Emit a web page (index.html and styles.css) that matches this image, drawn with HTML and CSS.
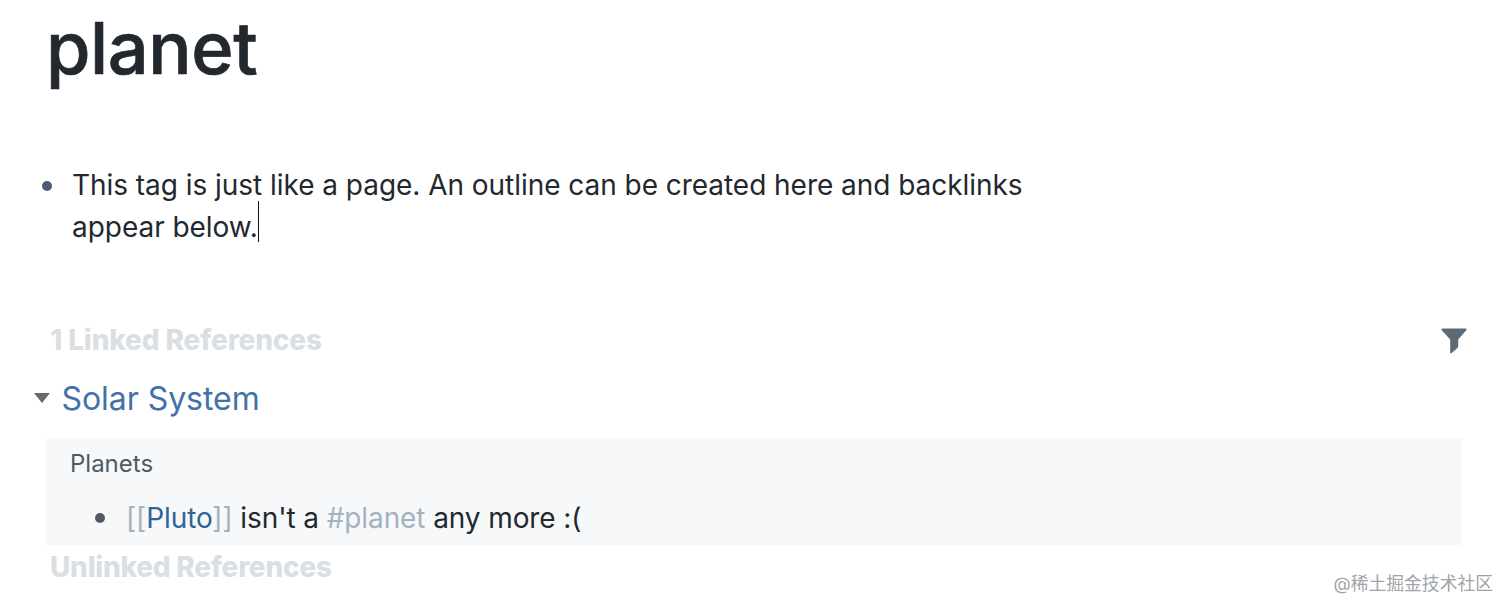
FILE: index.html
```html
<!DOCTYPE html>
<html lang="en">
  <head>
    <meta charset="UTF-8" />
    <title>planet</title>
    <link rel="stylesheet" href="styles.css">
  </head>
  <body>
    <div id="page">
      <h1 class="page-title">planet</h1>

      <!-- outline -->
      <div class="block">
        <span class="bullet"></span>
        <p class="block-text">This tag is just like a page. An outline can be created here and backlinks appear below.<span class="caret"></span></p>
      </div>

      <!-- references -->
      <div class="refs-head">
        <span class="refs-title">1 Linked References</span>
        <svg class="filter-icon" width="26" height="26" viewBox="0 0 26 26">
          <path d="M1.5 0.5h23c1 0 1.4 1 .8 1.8L17.2 11.5v7.3c0 .4-.2.7-.5 1l-6.3 5.4c-.5.4-1.2.1-1.2-.6V11.5L.7 2.3C.1 1.5.5 .5 1.5 .5z" fill="#5c6b78" />
        </svg>
      </div>

      <div class="ref-page">
        <span class="triangle"></span>
        <a class="ref-link">Solar System</a>
      </div>

      <div class="ref-card">
        <div class="ref-parent">Planets</div>
        <div class="ref-block">
          <span class="bullet small"></span>
          <span><span class="muted">[[</span><a class="page-ref">Pluto</a><span class="muted">]]</span> isn't a <span class="muted">#planet</span> any more :(</span>
        </div>
      </div>

      <div class="refs-title unlinked">Unlinked References</div>
    </div>
    <div class="watermark">@稀土掘金技术社区</div>
  </body>
</html>
```

FILE: styles.css
```css
html,
body {
  height: 100%;
}

body {
  margin: 0;
  background: #ffffff;
  color: #22282e;
  font-family: Inter, "Noto Sans CJK SC", sans-serif;
  overflow: hidden;
}

#page {
  padding-left: 46px;
  width: 1416px;
}

.page-title {
  margin: 0;
  font-size: 72px;
  line-height: 88px;
  height: 164px;
  padding-top: 4px;
  box-sizing: border-box;
  font-weight: 500;
  letter-spacing: -0.4px;
  -webkit-text-stroke: 0.7px #22282e;
  color: #22282e;
}

.block {
  display: flex;
  align-items: flex-start;
  height: 156px;
}

.bullet {
  width: 10px;
  height: 10px;
  border-radius: 50%;
  background: #4d5b74;
  margin: 17px 20px 0 -4px;
  flex-shrink: 0;
}

.block-text {
  margin: 0;
  width: 965px;
  font-size: 28px;
  line-height: 42px;
  letter-spacing: -0.04px;
}

.caret {
  display: inline-block;
  width: 1px;
  height: 41px;
  background: #111111;
  vertical-align: top;
  transform: translateY(-5px);
}

.refs-head {
  display: flex;
  justify-content: space-between;
  align-items: center;
  height: 40px;
  padding-left: 4px;
}

.filter-icon {
  margin-right: -5px;
  margin-top: 2px;
}

.refs-title {
  font-size: 28px;
  font-weight: 800;
  letter-spacing: -0.15px;
  color: #dadfe3;
}

.unlinked {
  padding-left: 4px;
  line-height: 44px;
  letter-spacing: -0.25px;
}

.ref-page {
  display: flex;
  align-items: center;
  height: 76px;
  margin-bottom: 2px;
  margin-left: -12px;
}

.triangle {
  width: 0;
  height: 0;
  border-left: 8px solid transparent;
  border-right: 8px solid transparent;
  border-top: 10px solid #666b70;
  margin-right: 11.5px;
}

.ref-link {
  font-size: 32px;
  letter-spacing: -0.05px;
  color: #4272a8;
}

.ref-card {
  background: #f6f8fa;
  height: 107px;
  padding-left: 24px;
  box-sizing: border-box;
}

.ref-parent {
  font-size: 24px;
  line-height: 51px;
  color: #4f5a64;
}

.ref-block {
  display: flex;
  align-items: center;
  margin-top: 7px;
  font-size: 28px;
  line-height: 44px;
  letter-spacing: -0.1px;
  padding-left: 25px;
}

.bullet.small {
  background: #4f5a66;
  margin: 0 21px 0 0;
}

.muted {
  color: #a5b1bd;
}

.page-ref {
  color: #2f6596;
}

.watermark {
  position: absolute;
  right: 19px;
  bottom: 16px;
  font-size: 17.8px;
  color: #a0a4a8;
}
```
